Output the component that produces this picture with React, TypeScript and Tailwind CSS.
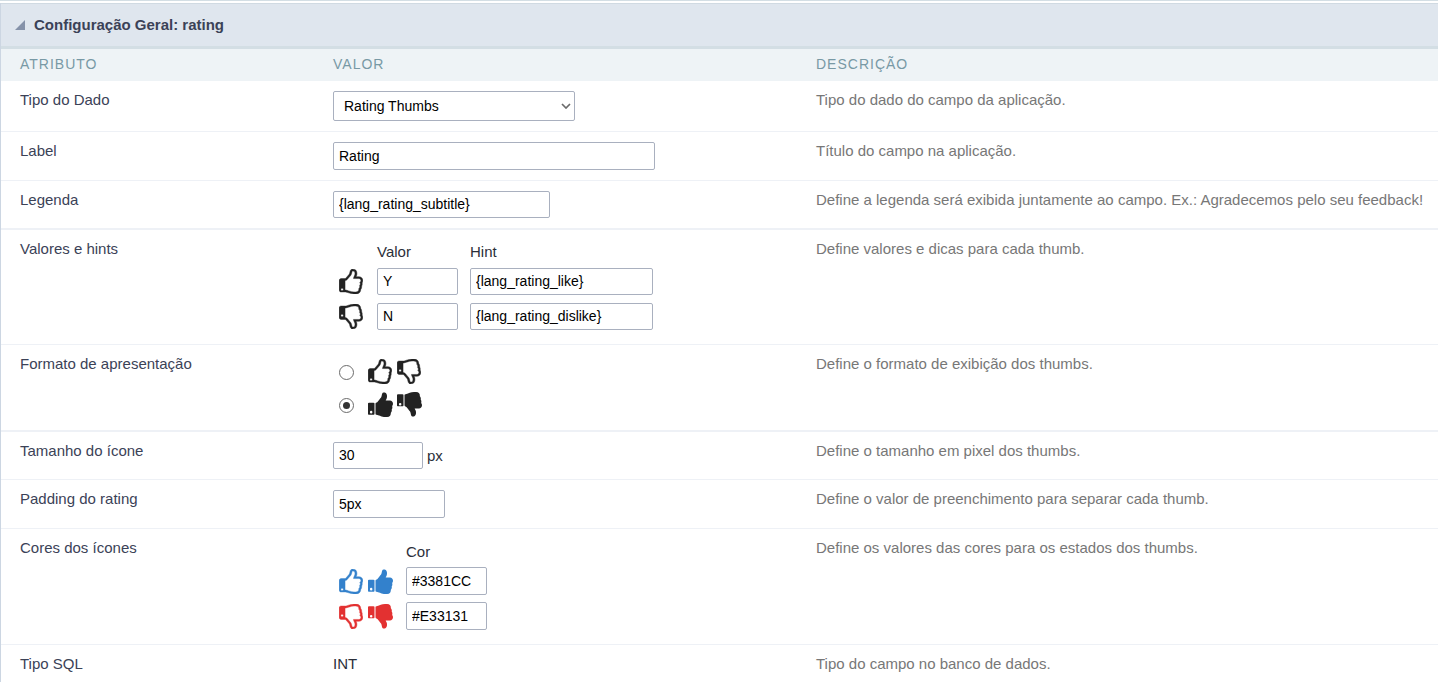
import React from "react";

const HAND_OUTLINE =
  "M1536 768q0-51-39-89.5t-89-38.5h-352q0-58 48-159.5t48-160.5q0-98-32-145t-128-47q-26 26-38 85t-30.5 125.5-59.5 109.5q-22 23-77 91-4 5-23 30t-31.5 41-34.5 42.5-40 44-38.5 35.5-40 27-35.5 9h-32v640h32q13 0 31.5 3t33 6.5 38 11 35 11.5 35.5 12.5 29 10.5q211 73 342 73h121q192 0 192-167 0-26-5-56 30-16 47.5-52.5t17.5-73.5-18-69q53-50 53-119 0-25-10-55.5t-25-47.5q32-1 53.5-47t21.5-81zm128-1q0 89-49 163 9 33 9 69 0 77-38 144 3 21 3 43 0 101-60 178 1 139-85 219.5t-227 80.5h-129q-96 0-189.5-22.5t-216.5-65.5q-116-40-138-40h-288q-53 0-90.5-37.5t-37.5-90.5v-640q0-53 37.5-90.5t90.5-37.5h274q36-24 137-155 58-75 107-128 24-25 35.5-85.5t30.5-126.5 62-108q39-37 90-37 84 0 151 32.5t102 101.5 35 186q0 93-48 192h176q104 0 180 76t76 179z";
const HAND_SOLID =
  "M480 832v640q0 26-19 45t-45 19h-288q-26 0-45-19t-19-45v-640q0-26 19-45t45-19h288q26 0 45 19t19 45zm1184 0q0 86-55 149 15 44 15 76 3 76-43 137 17 56 0 117-15 57-54 94 9 112-49 181-64 76-197 78h-129q-66 0-144-15.5t-121.5-29-120.5-39.5q-123-43-158-44-26-1-45-19.5t-19-44.5v-641q0-25 18-43.5t43-20.5q24-2 76-59t101-121q68-87 101-120 18-18 31-48t17.5-48.5 13.5-60.5q7-39 12.5-61t19.5-52 34-50q19-19 45-19 46 0 82.5 10.5t60 26 40 40.5 24 45 12 50 5 45 .5 39q0 38-9.5 76t-19 60-27.5 56q-3 6-10 18t-11 22-8 24h277q78 0 135 57t57 135z";

const OUTLINE = {
  size: "w-[24px]",
  stroke: 28,
  up: { viewBox: "120 0 1552 1672", d: `M400 1364a80 80 0 1 1-160 0a80 80 0 1 1 160 0z${HAND_OUTLINE}` },
  down: { viewBox: "120 120 1552 1672", d: `M400 900a80 80 0 1 1-160 0a80 80 0 1 1 160 0z${HAND_OUTLINE}` },
};
const SOLID = {
  size: "w-[25px]",
  stroke: 0,
  up: { viewBox: "64 100 1600 1570", d: `M346 1364a80 80 0 1 1-160 0a80 80 0 1 1 160 0z${HAND_SOLID}` },
  down: { viewBox: "64 122 1600 1570", d: `M346 900a80 80 0 1 1-160 0a80 80 0 1 1 160 0z${HAND_SOLID}` },
};

function Thumb({ down = false, solid = false, className = "" }: { down?: boolean; solid?: boolean; className?: string }) {
  const style = solid ? SOLID : OUTLINE;
  const shape = down ? style.down : style.up;
  return (
    <svg
      viewBox={shape.viewBox}
      preserveAspectRatio="none"
      className={`h-[25px] shrink-0 ${style.size} ${className}`}
      fill="currentColor"
      stroke="currentColor"
      strokeWidth={style.stroke}
      aria-hidden="true"
    >
      <path fillRule="evenodd" d={shape.d} transform={down ? "matrix(1 0 0 -1 0 1792)" : undefined} />
    </svg>
  );
}

const field = "block rounded-xs border border-[#a9b0bf] bg-white px-[5px] pb-px text-sm leading-4 text-black";

function Field({ label, value, className }: { label: string; value: string; className: string }) {
  return <input type="text" aria-label={label} defaultValue={value} className={`${field} ${className}`} />;
}

function Row({
  title,
  description,
  height,
  thick = false,
  children,
}: {
  title: string;
  description: string;
  height: string;
  thick?: boolean;
  children: React.ReactNode;
}) {
  return (
    <tr className={`${height} ${thick ? "border-b-2" : "border-b"} border-[#eef1f6] align-top`}>
      <th scope="row" className="py-[10px] pl-[19px] text-left font-normal text-[#3b4257]">
        {title}
      </th>
      <td className="py-[10px] pl-[19px] text-[#2b2f3a]">{children}</td>
      <td className="py-[10px] pl-[19px] whitespace-nowrap text-[#777]">{description}</td>
    </tr>
  );
}

export default function App() {
  return (
    <main className="border-t border-[#d3dee4] bg-white pt-[2px] font-['Liberation_Sans',Arial,sans-serif] text-[15px] leading-[18px]">
      <section className="border-l border-[#ccd6e2]">
        <h1 className="border-t border-b-3 border-t-[#d0dae2] border-b-[#d3dee4] bg-[#dfe6ee] text-[15px] font-bold text-[#3b4257]">
          <button type="button" className="flex h-[42px] w-full items-center gap-[9px] pl-[14px] text-left">
            <svg viewBox="0 0 10 10" className="size-[10px]" fill="#8592a9" aria-hidden="true">
              <path d="M10 0V10H0Z" />
            </svg>
            Configuração Geral: rating
          </button>
        </h1>
        <table className="w-full table-fixed border-collapse">
          <colgroup>
            <col className="w-[313px]" />
            <col className="w-[483px]" />
            <col />
          </colgroup>
          <thead>
            <tr className="h-8 bg-[#eef3f6] text-left text-sm tracking-[1px] text-[#7899a5]">
              <th className="pb-[2px] pl-[19px] font-normal">ATRIBUTO</th>
              <th className="pb-[2px] pl-[19px] font-normal">VALOR</th>
              <th className="pb-[2px] pl-[19px] font-normal">DESCRIÇÃO</th>
            </tr>
          </thead>
          <tbody>
            <Row title="Tipo do Dado" description="Tipo do dado do campo da aplicação." height="h-[50px]">
              <div className="relative w-[242px]">
                <select
                  aria-label="Tipo do Dado"
                  className="block h-[30px] w-full appearance-none rounded-xs border border-[#a9b0bf] bg-white pl-[10px] text-sm text-black"
                >
                  <option>Rating Thumbs</option>
                </select>
                <svg
                  viewBox="0 0 10 6"
                  className="pointer-events-none absolute top-3 right-1 h-[6px] w-[10px]"
                  fill="none"
                  stroke="#6b6b6b"
                  strokeWidth="1.7"
                  aria-hidden="true"
                >
                  <path d="M1 1L5 5L9 1" />
                </svg>
              </div>
            </Row>
            <Row title="Label" description="Título do campo na aplicação." height="h-[49px]">
              <Field label="Label" value="Rating" className="h-7 w-[322px]" />
            </Row>
            <Row
              title="Legenda"
              description="Define a legenda será exibida juntamente ao campo. Ex.: Agradecemos pelo seu feedback!"
              height="h-12"
              thick
            >
              <Field label="Legenda" value="{lang_rating_subtitle}" className="h-[27px] w-[217px]" />
            </Row>
            <Row title="Valores e hints" description="Define valores e dicas para cada thumb." height="h-[115px]">
              <div className="grid grid-cols-[26px_81px_183px] items-center gap-x-3 gap-y-2 pt-1 pl-[6px]">
                <span className="col-start-2 leading-4">Valor</span>
                <span className="leading-4">Hint</span>
                <Thumb className="text-[#222]" />
                <Field label="Valor Y" value="Y" className="h-[27px] w-full" />
                <Field label="Hint Y" value="{lang_rating_like}" className="h-[27px] w-full" />
                <Thumb down className="text-[#222]" />
                <Field label="Valor N" value="N" className="h-[27px] w-full" />
                <Field label="Hint N" value="{lang_rating_dislike}" className="h-[27px] w-full" />
              </div>
            </Row>
            <Row
              title="Formato de apresentação"
              description="Define o formato de exibição dos thumbs."
              height="h-[87px]"
              thick
            >
              <div className="flex flex-col gap-2 pt-1 pl-[6px] text-[#222]">
                {[false, true].map((solid) => (
                  <label key={String(solid)} className="flex items-center">
                    <input
                      type="radio"
                      name="formato"
                      defaultChecked={solid}
                      aria-label={solid ? "Ícones preenchidos" : "Ícones em contorno"}
                      className="mt-[3px] mr-[14px] size-[15px] appearance-none rounded-full border border-[#6b6b6b] bg-clip-content p-[3px] checked:bg-[#333]"
                    />
                    <span className={`flex ${solid ? "gap-1" : "gap-[5px]"}`}>
                      <Thumb solid={solid} />
                      <Thumb down solid={solid} />
                    </span>
                  </label>
                ))}
              </div>
            </Row>
            <Row title="Tamanho do ícone" description="Define o tamanho em pixel dos thumbs." height="h-12">
              <div className="flex items-center gap-1">
                <Field label="Tamanho do ícone" value="30" className="h-[27px] w-[90px]" />
                <span>px</span>
              </div>
            </Row>
            <Row
              title="Padding do rating"
              description="Define o valor de preenchimento para separar cada thumb."
              height="h-[49px]"
            >
              <Field label="Padding do rating" value="5px" className="h-7 w-28" />
            </Row>
            <Row
              title="Cores dos ícones"
              description="Define os valores das cores para os estados dos thumbs."
              height="h-[116px]"
            >
              <div className="grid grid-cols-[55px_81px] items-center gap-x-3 gap-y-[7px] pt-[5px] pl-[6px]">
                <span className="col-start-2 leading-4">Cor</span>
                <span className="flex gap-[5px] text-[#3381cc]">
                  <Thumb />
                  <Thumb solid />
                </span>
                <Field label="Cor positiva" value="#3381CC" className="h-7 w-full" />
                <span className="flex gap-[5px] text-[#e33131]">
                  <Thumb down />
                  <Thumb down solid />
                </span>
                <Field label="Cor negativa" value="#E33131" className="h-7 w-full" />
              </div>
            </Row>
            <Row title="Tipo SQL" description="Tipo do campo no banco de dados." height="h-[38px]">
              INT
            </Row>
          </tbody>
        </table>
      </section>
    </main>
  );
}
